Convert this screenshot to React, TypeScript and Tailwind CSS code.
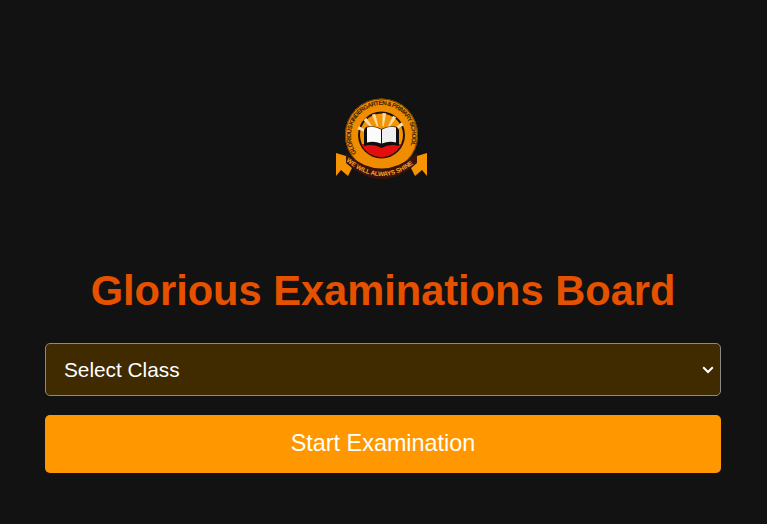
const font = { fontFamily: '"Liberation Sans", Arial, sans-serif' };

function Logo() {
  const rays = [-64, -40, -18, 6, 30, 54];
  return (
    <svg width="92" height="82" viewBox="0 0 92 82" className="block">
      <defs>
        <path id="ringText" d="M 20.5 55 A 30.5 30.5 0 1 1 70.5 55" />
        <path id="bannerText" d="M 10 63 Q 45.5 93 81 63" />
      </defs>
      {/* ring */}
      <circle cx="45.5" cy="37" r="36.5" fill="#f08c00" />
      <circle cx="45.5" cy="37" r="36" fill="none" stroke="#4a2a08" strokeWidth="0.8" />
      <circle cx="45.5" cy="37" r="23.5" fill="#1d1208" />
      <circle cx="45.5" cy="37" r="21.5" fill="#f59300" />
      {/* sun rays */}
      {rays.map((a) => (
        <path key={a} d="M43.8 15 H47.4 L46.4 28 H45 Z" fill="#fbdca2" transform={`rotate(${a} 45.5 41)`} />
      ))}
      {/* red base */}
      <path d="M26 46 H65 A21.5 21.5 0 0 1 25.5 46 Z" fill="#e30f0f" />
      {/* book */}
      <path d="M28 32 L30 29 Q38 27 45.5 31 Q53 27 61 29 L63 32 L63 48 Q54 45 45.5 50 Q37 45 28 48 Z" fill="#0e0e0e" />
      <path d="M31 29.5 Q38 27.5 45 31.5 L45 45.5 Q38 42.5 31 44.5 Z" fill="#fbfbfb" />
      <path d="M60 29.5 Q53 27.5 46 31.5 L46 45.5 Q53 42.5 60 44.5 Z" fill="#efefef" />
      {/* ribbon */}
      <path d="M0 55 L10 58 L16 70 L12 78 L5 72 L0 78 Z" fill="#f59300" />
      <path d="M91 55 L81 58 L75 70 L79 78 L86 72 L91 78 Z" fill="#f59300" />
      <path d="M10 55 Q45.5 86 81 55 L81 65 Q45.5 97 10 65 Z" fill="#3a130c" />
      <text fontSize="6.3" fontWeight="700" fill="#3b2004" style={font}>
        <textPath href="#ringText" textLength="124" lengthAdjust="spacing">GLORIOUS KINDERGARTEN &amp; PRIMARY SCHOOL</textPath>
      </text>
      <text fontSize="6.4" fontWeight="700" fill="#f5a524" style={font}>
        <textPath href="#bannerText" textLength="74" lengthAdjust="spacing">WE WILL ALWAYS SHINE</textPath>
      </text>
    </svg>
  );
}

export default function App() {
  return (
    <div className="min-h-[524px] bg-[#121212] pl-[45px] pr-[46px] pt-[98px] pb-[51px]" style={font}>
      <div className="flex justify-center pr-[2px]">
        <Logo />
      </div>
      <h1 className="mt-[87px] text-center text-[41.6px] leading-[48px] font-bold text-[#e65100]">
        Glorious Examinations Board
      </h1>
      <div className="relative mt-[28px]">
        <select className="block h-[53px] w-full appearance-none rounded-[5px] border border-[#8a8a8a] bg-[#402a00] pl-[18px] pr-8 text-[20.8px] text-white">
          <option>Select Class</option>
        </select>
        <svg width="12" height="8" viewBox="0 0 12 8" fill="none" className="absolute right-[7px] top-[23px]">
          <path d="M1.2 1.2 L6 6 L10.8 1.2" stroke="#fff" strokeWidth="2" />
        </svg>
      </div>
      <button
        type="button"
        className="mt-[19px] block h-[58px] w-full rounded-[5px] bg-[#ff9800] text-[23.4px] text-white"
      >
        Start Examination
      </button>
    </div>
  );
}
